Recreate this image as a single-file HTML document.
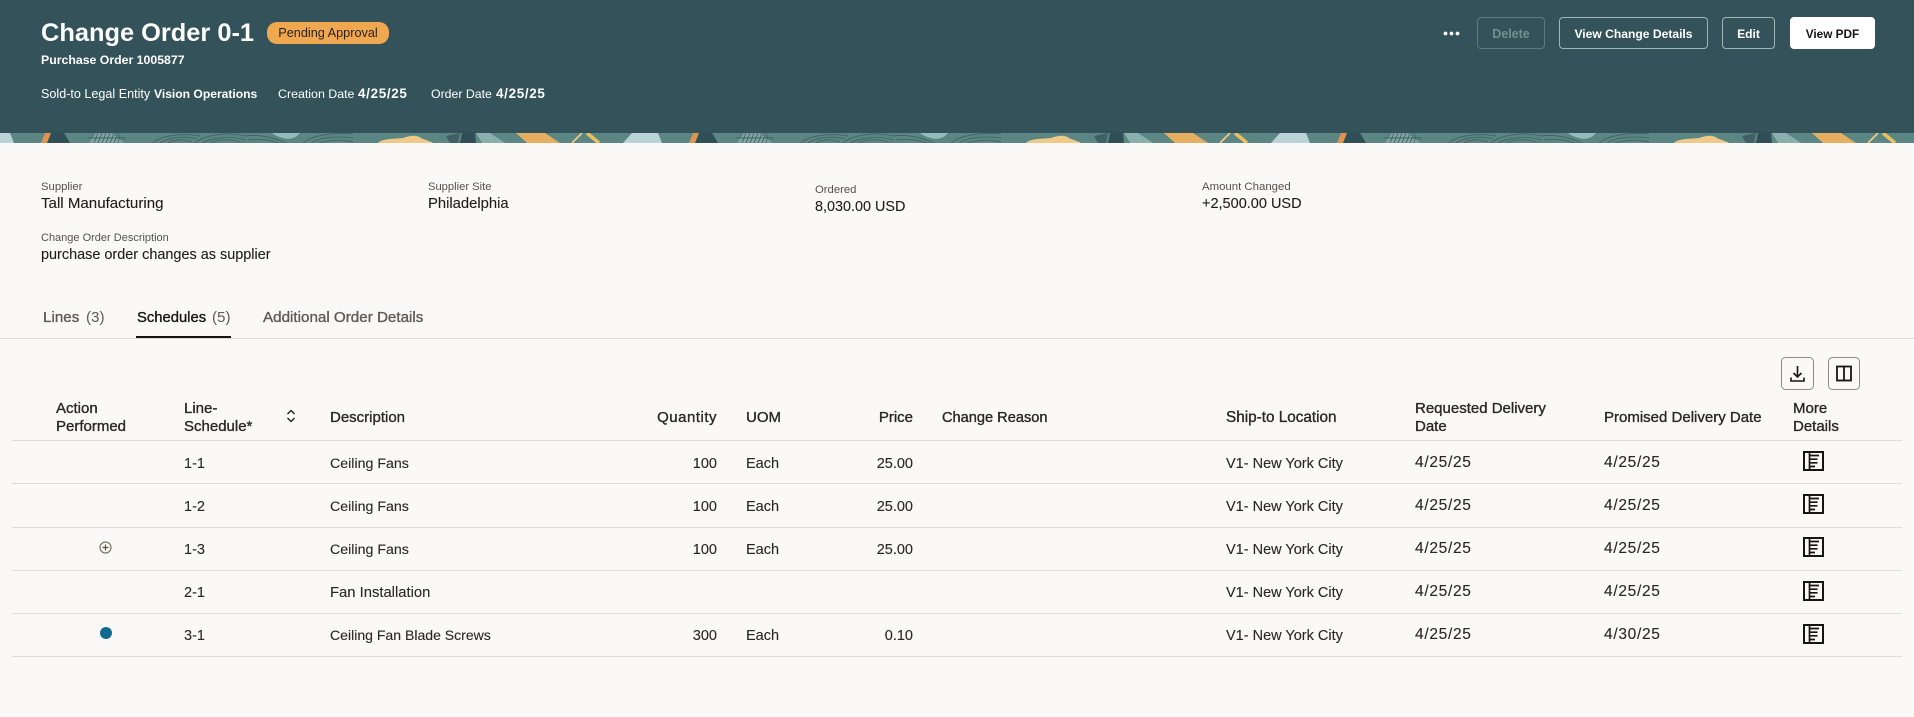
<!DOCTYPE html>
<html lang="en"><head><meta charset="utf-8"><title>Change Order 0-1</title>
<style>
html,body{margin:0;padding:0;width:1914px;height:717px;overflow:hidden;background:#fbf9f8;font-family:"Liberation Sans",sans-serif;color:#161513}
.a{position:absolute;white-space:nowrap;line-height:20px;height:20px}
.r{text-align:right}
.hd{background:#33525a;position:absolute;left:0;top:0;width:1914px;height:133px}
.w{color:#fff}
b{font-weight:700}
.btn{position:absolute;top:17px;height:32px;box-sizing:border-box;border:1px solid #9fb6b6;border-radius:4px;color:#fff;font-size:12.1px;font-weight:700;text-align:center;line-height:32px}
.l{font-size:11.3px;color:#55514d;transform:translateY(1px)}
.v{font-size:14.6px;color:#1f1d1b;transform:translateY(1px);-webkit-text-stroke:.1px #1f1d1b}
.th{font-size:15px;color:#2a2826;-webkit-text-stroke:.35px #2a2826;transform:translateY(1px)}
.td{font-size:14.5px;color:#2a2826;transform:translateY(1px);-webkit-text-stroke:.12px #2a2826}
.d{letter-spacing:.7px;font-size:15.5px}
.ln{position:absolute;left:12px;width:1890px;height:1px;background:#dfdedc}
.tab{font-size:15.2px;color:#5e5a56;-webkit-text-stroke:.35px #5e5a56;transform:translateY(1px)}
.ic{position:absolute;left:1803px;width:21px;height:20px}
</style></head><body>
<div class="hd"></div>
<div class="a w" style="left:41px;top:23px;font-size:25.4px;font-weight:700">Change Order 0-1</div>
<div style="position:absolute;left:267px;top:22px;width:122px;height:22px;border-radius:10px;background:#f0a850;color:#2c2218;font-size:12.7px;line-height:22px;text-align:center">Pending Approval</div>
<div class="a w" style="left:41px;top:50px;font-size:12.3px;font-weight:700">Purchase Order 1005877</div>
<div class="a w" style="left:41px;top:84px;font-size:12.6px">Sold-to Legal Entity</div>
<div class="a w" style="left:154px;top:84px;font-size:12.1px;font-weight:700">Vision Operations</div>
<div class="a w" style="left:278px;top:84px;font-size:12.4px">Creation Date</div>
<div class="a w" style="left:358px;top:84px;font-size:13.4px;font-weight:700;letter-spacing:.7px">4/25/25</div>
<div class="a w" style="left:431px;top:84px;font-size:12.3px">Order Date</div>
<div class="a w" style="left:496px;top:84px;font-size:13.4px;font-weight:700;letter-spacing:.7px">4/25/25</div>

<svg style="position:absolute;left:1443px;top:31px" width="17" height="5"><circle cx="2.5" cy="2.5" r="1.9" fill="#fff"/><circle cx="8.5" cy="2.5" r="1.9" fill="#fff"/><circle cx="14.5" cy="2.5" r="1.9" fill="#fff"/></svg>
<div class="btn" style="left:1477px;width:68px;border-color:#5c7b80;color:#71918f;font-size:12.5px">Delete</div>
<div class="btn" style="left:1559px;width:149px">View Change Details</div>
<div class="btn" style="left:1722px;width:53px">Edit</div>
<div class="btn" style="left:1790px;width:85px;background:#fff;border-color:#fff;color:#161513;font-size:11.8px">View PDF</div>

<svg style="position:absolute;left:0;top:133px" width="1914" height="10">
<defs><pattern id="p" patternUnits="userSpaceOnUse" width="648" height="10">
<rect width="648" height="10" fill="#5b8683"/>
<path d="M0 0H10L14 10H0Z M632 0H648V10H623Z" fill="#b9d3d6"/>
<path d="M50 0H64L70 10H47Z" fill="#2f4e55"/>
<path d="M45 0H51L47 10H41Z" fill="#dd9550"/>
<path d="M96 0H112L124 10H89Z" fill="#7fa3a1"/>
<g stroke="#41646a" stroke-width=".9" fill="none">
<path d="M94 10L98 0M98 10L102 0M102 10L106 0M106 10L110 0M110 10L114 0M114 10L118 0M118 10L120 2M88 5H126"/>
<path d="M153 10C160 2 185 0 200 3M160 10C168 4 185 3 197 6M168 10C174 6 185 6 192 9M195 10C205 1 230 -1 245 3M202 10C212 4 232 3 246 7M210 10C218 6 230 6 240 9M245 3C258 1 272 4 286 10M248 7C258 5 270 7 279 10M303 10C312 2 335 -1 353 1M311 10C320 4 338 3 353 5M320 10C328 7 340 6 353 9"/>
</g>
<path d="M272 0H300C296 5 290 7 283 5C278 4 275 2 272 0Z" fill="#94bcbb"/>
<path d="M378 10C383 5 395 6 403 5C411 2 417 2 421 5C425 7 430 8 433 10Z" fill="#efc988"/>
<path d="M446 3L460 0L458 10H450Z" fill="#3f6066"/>
<path d="M462 0H475L476 10H460Z" fill="#2f4e55"/>
<path d="M476 0H490L505 10H482Z" fill="#8ab0ae"/>
<path d="M516 0H545L560 10H527Z" fill="#e5ae61"/>
<path d="M572 10L582 0" stroke="#efc98a" stroke-width="1.800" fill="none"/>
<path d="M587 0L599 10" stroke="#efc15f" stroke-width="3.500" fill="none"/>
</pattern></defs>
<rect width="1914" height="10" fill="url(#p)"/>
</svg>

<div class="a l" style="left:41px;top:176px">Supplier</div>
<div class="a v" style="left:41px;top:193px;font-size:15.1px">Tall Manufacturing</div>
<div class="a l" style="left:41px;top:227px;font-size:11px">Change Order Description</div>
<div class="a v" style="left:41px;top:244px;font-size:14.45px">purchase order changes as supplier</div>
<div class="a l" style="left:428px;top:176px;font-size:11.2px">Supplier Site</div>
<div class="a v" style="left:428px;top:193px;font-size:14.8px">Philadelphia</div>
<div class="a l" style="left:815px;top:179px">Ordered</div>
<div class="a v" style="left:815px;top:196px;font-size:14.4px">8,030.00 USD</div>
<div class="a l" style="left:1202px;top:176px;font-size:11.4px">Amount Changed</div>
<div class="a v" style="left:1202px;top:193px;font-size:14.5px">+2,500.00 USD</div>

<div class="a tab" style="left:43px;top:307px">Lines</div>
<div class="a tab" style="left:86px;top:307px;-webkit-text-stroke:0">(3)</div>
<div class="a tab" style="left:137px;top:307px;color:#161513;font-size:14.8px;-webkit-text-stroke:.35px #161513">Schedules</div>
<div class="a tab" style="left:212px;top:307px;-webkit-text-stroke:0">(5)</div>
<div class="a tab" style="left:263px;top:307px">Additional Order Details</div>
<div style="position:absolute;left:0;top:338px;width:1914px;height:1px;background:#dcdbd9"></div>
<div style="position:absolute;left:136px;top:336px;width:95px;height:2px;background:#161513"></div>

<svg style="position:absolute;left:1781px;top:357px" width="33" height="33" fill="none"><rect x=".5" y=".5" width="32" height="32" rx="4" stroke="#8f8c88"/><path d="M16.5 9V20M12.500 16L16.5 20L20.500 16" stroke="#161513" stroke-width="1.6"/><path d="M10 20.500V24H23V20.500" stroke="#161513" stroke-width="1.6"/></svg>
<svg style="position:absolute;left:1828px;top:357px" width="32" height="33" fill="none"><rect x=".5" y=".5" width="31" height="32" rx="4" stroke="#8f8c88"/><rect x="9" y="9.500" width="14" height="14" stroke="#161513" stroke-width="1.8"/><path d="M16 9.500V23.500" stroke="#161513" stroke-width="1.8"/></svg>

<div class="a th" style="left:56px;top:398px">Action</div>
<div class="a th" style="left:56px;top:416px">Performed</div>
<div class="a th" style="left:184px;top:398px">Line-</div>
<div class="a th" style="left:184px;top:416px">Schedule*</div>
<svg style="position:absolute;left:286px;top:409px" width="10" height="14" fill="none" stroke="#161513" stroke-width="1.3"><path d="M1.500 5L5 1.500L8.500 5M1.500 9L5 12.500L8.500 9"/></svg>
<div class="a th" style="left:330px;top:407px">Description</div>
<div class="a th r" style="left:617px;width:100px;top:407px;letter-spacing:.5px">Quantity</div>
<div class="a th" style="left:746px;top:407px">UOM</div>
<div class="a th r" style="left:813px;width:100px;top:407px">Price</div>
<div class="a th" style="left:942px;top:407px;font-size:14.6px">Change Reason</div>
<div class="a th" style="left:1226px;top:407px;font-size:15.3px">Ship-to Location</div>
<div class="a th" style="left:1415px;top:398px">Requested Delivery</div>
<div class="a th" style="left:1415px;top:416px">Date</div>
<div class="a th" style="left:1604px;top:407px">Promised Delivery Date</div>
<div class="a th" style="left:1793px;top:398px">More</div>
<div class="a th" style="left:1793px;top:416px">Details</div>
<div class="ln" style="top:440px"></div>

<div class="a td" style="left:184px;top:453px">1-1</div><div class="a td" style="left:330px;top:453px;font-size:14.2px">Ceiling Fans</div><div class="a td r" style="left:617px;width:100px;top:453px">100</div><div class="a td" style="left:746px;top:453px">Each</div><div class="a td r" style="left:813px;width:100px;top:453px">25.00</div><div class="a td" style="left:1226px;top:453px">V1- New York City</div><div class="a td d" style="left:1415px;top:452px">4/25/25</div><div class="a td d" style="left:1604px;top:452px">4/25/25</div>
<svg class="ic" style="top:451px" viewBox="0 0 21 20" fill="none" stroke="#161513"><rect x="1" y="1" width="19" height="18" stroke-width="2"/><path d="M6.500 1V19" stroke-width="1.700"/><path d="M6.500 4.500H16M6.500 8.200H14.500M6.500 11.800H14.500M6.500 15.500H12" stroke-width="1.700"/></svg>
<div class="ln" style="top:483px"></div>

<div class="a td" style="left:184px;top:496px">1-2</div><div class="a td" style="left:330px;top:496px;font-size:14.2px">Ceiling Fans</div><div class="a td r" style="left:617px;width:100px;top:496px">100</div><div class="a td" style="left:746px;top:496px">Each</div><div class="a td r" style="left:813px;width:100px;top:496px">25.00</div><div class="a td" style="left:1226px;top:496px">V1- New York City</div><div class="a td d" style="left:1415px;top:495px">4/25/25</div><div class="a td d" style="left:1604px;top:495px">4/25/25</div>
<svg class="ic" style="top:494px" viewBox="0 0 21 20" fill="none" stroke="#161513"><rect x="1" y="1" width="19" height="18" stroke-width="2"/><path d="M6.500 1V19" stroke-width="1.700"/><path d="M6.500 4.500H16M6.500 8.200H14.500M6.500 11.800H14.500M6.500 15.500H12" stroke-width="1.700"/></svg>
<div class="ln" style="top:527px"></div>

<svg style="position:absolute;left:99px;top:541px" width="13" height="13" fill="none" stroke="#55553f"><circle cx="6.500" cy="6.500" r="5.500" stroke="#77775c" stroke-width="1.200"/><path d="M6.500 3.500V9.500M3.500 6.500H9.500" stroke-width="1.200"/></svg>
<div class="a td" style="left:184px;top:539px">1-3</div><div class="a td" style="left:330px;top:539px;font-size:14.2px">Ceiling Fans</div><div class="a td r" style="left:617px;width:100px;top:539px">100</div><div class="a td" style="left:746px;top:539px">Each</div><div class="a td r" style="left:813px;width:100px;top:539px">25.00</div><div class="a td" style="left:1226px;top:539px">V1- New York City</div><div class="a td d" style="left:1415px;top:538px">4/25/25</div><div class="a td d" style="left:1604px;top:538px">4/25/25</div>
<svg class="ic" style="top:537px" viewBox="0 0 21 20" fill="none" stroke="#161513"><rect x="1" y="1" width="19" height="18" stroke-width="2"/><path d="M6.500 1V19" stroke-width="1.700"/><path d="M6.500 4.500H16M6.500 8.200H14.500M6.500 11.800H14.500M6.500 15.500H12" stroke-width="1.700"/></svg>
<div class="ln" style="top:570px"></div>

<div class="a td" style="left:184px;top:582px">2-1</div><div class="a td" style="left:330px;top:582px;font-size:14.8px">Fan Installation</div><div class="a td" style="left:1226px;top:582px">V1- New York City</div><div class="a td d" style="left:1415px;top:581px">4/25/25</div><div class="a td d" style="left:1604px;top:581px">4/25/25</div>
<svg class="ic" style="top:581px" viewBox="0 0 21 20" fill="none" stroke="#161513"><rect x="1" y="1" width="19" height="18" stroke-width="2"/><path d="M6.500 1V19" stroke-width="1.700"/><path d="M6.500 4.500H16M6.500 8.200H14.500M6.500 11.800H14.500M6.500 15.500H12" stroke-width="1.700"/></svg>
<div class="ln" style="top:613px"></div>

<div style="position:absolute;left:99.500px;top:627px;width:12px;height:12px;border-radius:50%;background:#0f6a8f"></div>
<div class="a td" style="left:184px;top:625px">3-1</div><div class="a td" style="left:330px;top:624px;font-size:14.05px">Ceiling Fan Blade Screws</div><div class="a td r" style="left:617px;width:100px;top:625px">300</div><div class="a td" style="left:746px;top:625px">Each</div><div class="a td r" style="left:813px;width:100px;top:625px">0.10</div><div class="a td" style="left:1226px;top:625px">V1- New York City</div><div class="a td d" style="left:1415px;top:624px">4/25/25</div><div class="a td d" style="left:1604px;top:624px">4/30/25</div>
<svg class="ic" style="top:624px" viewBox="0 0 21 20" fill="none" stroke="#161513"><rect x="1" y="1" width="19" height="18" stroke-width="2"/><path d="M6.500 1V19" stroke-width="1.700"/><path d="M6.500 4.500H16M6.500 8.200H14.500M6.500 11.800H14.500M6.500 15.500H12" stroke-width="1.700"/></svg>
<div class="ln" style="top:656px"></div>
</body></html>
